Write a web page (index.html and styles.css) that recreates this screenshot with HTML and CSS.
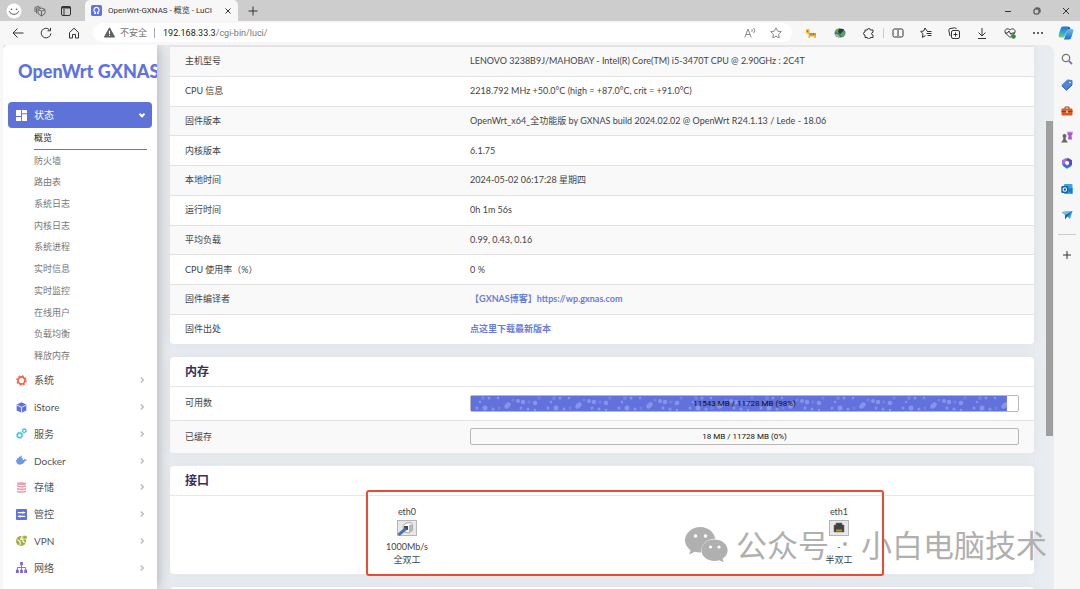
FILE: index.html
```
<!DOCTYPE html>
<html lang="zh-CN">
<head>
<meta charset="utf-8">
<meta name="viewport" content="width=device-width, initial-scale=1">
<title>OpenWrt-GXNAS - 概览 - LuCI</title>
<link rel="stylesheet" href="styles.css">
</head>
<body>
<header class="titlebar">
  <div class="window-tools">
    <button class="avatar" aria-label="用户"><svg viewBox="0 0 16 16" width="16" height="16"><circle cx="8" cy="8" r="7.5" fill="#fff"/><path d="M3.2 8.2c1.6 4.2 8 4.2 9.6 0" fill="none" stroke="#555" stroke-width="1"/><circle cx="5.5" cy="6.2" r=".8" fill="#555"/><circle cx="10.5" cy="6.2" r=".8" fill="#555"/></svg></button>
    <button aria-label="工作区"><svg class="line" viewBox="0 0 12 12" width="12" height="12"><path d="M4 4.500 7.500 3 11 4.500v4L7.500 11 4 8.500zM4 4.500l3.500 1.700L11 4.500M7.500 6.200V11M2.600 8.500V3.500L6.500 2M1 7V2.500L5 1"/></svg></button>
    <button aria-label="标签操作"><svg class="line dark" viewBox="0 0 12 12" width="12" height="12"><rect x="1.500" y="1.500" width="9" height="9" rx="1.500"/><path d="M1.500 2.500h9" stroke-width="2"/><path d="M4 4v6.500"/></svg></button>
  </div>
  <div class="tab">
    <svg viewBox="0 0 12 12" width="11" height="11"><rect width="12" height="12" rx="2" fill="#6172e8"/><path d="M3.500 9.200h1.300V8A2.800 2.800 0 1 1 7.200 8v1.200h1.300" fill="none" stroke="#fff" stroke-width="1.300"/></svg>
    <span>OpenWrt-GXNAS - 概览 - LuCI</span>
    <button aria-label="关闭标签"><svg class="line dark" viewBox="0 0 8 8" width="8" height="8"><path d="M1.500 1.500l5 5M6.500 1.500l-5 5"/></svg></button>
  </div>
  <button class="new-tab" aria-label="新建标签"><svg class="line dark" viewBox="0 0 10 10" width="10" height="10"><path d="M5 .5v9M.5 5h9"/></svg></button>
  <div class="window-controls">
    <button aria-label="最小化"><svg class="line dark" viewBox="0 0 8 8" width="8" height="8"><path d="M1 4.500h6"/></svg></button>
    <button aria-label="还原"><svg class="line dark" viewBox="0 0 8 8" width="8" height="8"><rect x="1" y="2" width="5" height="5" rx="1"/><path d="M2.500 1h3A1.500 1.500 0 0 1 7 2.500v3"/></svg></button>
    <button aria-label="关闭"><svg class="line dark" viewBox="0 0 8 8" width="8" height="8"><path d="M1 1l6 6M7 1 1 7"/></svg></button>
  </div>
</header>

<div class="toolbar">
  <div class="nav-buttons">
    <button aria-label="后退"><svg class="line dark" viewBox="0 0 12 12" width="12" height="12"><path d="M11.500 6H1M5.500 1.500 1 6l4.500 4.500"/></svg></button>
    <button aria-label="刷新"><svg class="line dark" viewBox="0 0 12 12" width="12" height="12"><path d="M10.800 6.500A4.800 4.800 0 1 1 9.500 2.800M10.500.8v3h-3"/></svg></button>
    <button aria-label="主页"><svg class="line dark" viewBox="0 0 12 12" width="12" height="12"><path d="M1.500 5.500 6 1.200l4.500 4.300V11H7.500V7.500h-3V11h-3z"/></svg></button>
  </div>
  <div class="address">
    <svg viewBox="0 0 12 12" width="11" height="11"><path d="M6 .8 11.600 11H.4z" fill="#616161" stroke="#616161" stroke-linejoin="round"/><path d="M6 4v3.500M6 8.500v1.300" stroke="#fff" stroke-width="1.200"/></svg>
    <span class="unsafe">不安全</span>
    <span class="url"><b>192.168.33.3</b>/cgi-bin/luci/</span>
    <button aria-label="朗读"><svg class="line gray" viewBox="0 0 12 12" width="12" height="12"><path d="M.8 10.500 4 2l3.200 8.500M2 7.500h4M7.500 2c1 .8 1 2 0 3M9.500 1c1.500 1.500 1.500 3.800 0 5"/></svg></button>
    <button aria-label="收藏"><svg class="line gray" viewBox="0 0 12 12" width="12" height="12"><path d="M6 .8l1.600 3.300 3.700.5-2.700 2.600.6 3.700L6 9.200l-3.200 1.700.6-3.700L.7 4.600l3.700-.5z"/></svg></button>
  </div>
  <div class="extensions">
    <button aria-label="扩展一"><svg viewBox="0 0 12 12" width="12" height="12"><path d="M1 2l1 .6L3.500 2l1 .6V6H11v5H9.500V9.500H5V11H3.500V7L1 6z" fill="#efb32d"/><path d="M4.500 6h6.500v2.500H4.500z" fill="#e09a25"/><path d="M6 6v2M8.500 6v2" stroke="#a96b20"/><circle cx="2.500" cy="4" r=".6" fill="#633"/></svg></button>
    <button aria-label="下载管理器"><svg viewBox="0 0 12 12" width="12" height="12"><ellipse cx="6" cy="6" rx="5.500" ry="4.500" fill="#2876b8"/><path d="M1 4.500C2 2 5 1 7 2L5 5 3 6zM6 7l4-3 1 3-3 3z" fill="#67a83a"/><path d="M5 2h5L8 5 6.500 7 4 5z" fill="#2d3d2a"/><path d="M1 7l3 .5 2 2.500-3-.5z" fill="#f1c52f"/></svg></button>
    <button aria-label="扩展"><svg class="line dark" viewBox="0 0 12 12" width="12" height="12"><path d="M2 3h2.300a1.500 1.500 0 0 1 3 0H10v2.300a1.300 1.300 0 0 0 0 2.800v2.400H7.300a1.500 1.500 0 0 1-3 0H2V8a1.500 1.500 0 0 1 0-3z"/></svg></button>
  </div>
  <div class="tools">
    <button aria-label="分屏"><svg class="line dark" viewBox="0 0 12 12" width="12" height="12"><path d="M5 2H2.500Q1 2 1 3.500v5Q1 10 2.500 10H5M7 2h2.500Q11 2 11 3.500v5Q11 10 9.500 10H7M6 1v10"/></svg></button>
    <button aria-label="收藏夹"><svg class="line dark" viewBox="0 0 12 12" width="12" height="12"><path d="M7 4 5 1 3.700 4 .7 4.500 3 6.800l-.6 3.500L5.500 8.700M7 4.500h4.500M6.500 6.500h5M7.500 8.500h4"/></svg></button>
    <button aria-label="集锦"><svg class="line dark" viewBox="0 0 12 12" width="12" height="12"><rect x="3.500" y="3.500" width="8" height="8" rx="1.500"/><path d="M7.500 5.500v4M5.500 7.500h4M2 9 .8 3.500Q.5 2 2 1.600L6.500.8Q8 .6 8.400 2"/></svg></button>
    <button aria-label="下载"><svg class="line dark" viewBox="0 0 12 12" width="12" height="12"><path d="M6 1v7.500M2.500 5.500 6 9l3.500-3.500M2 11.500h8"/></svg></button>
    <button aria-label="浏览器概要"><svg class="line dark" viewBox="0 0 12 12" width="12" height="12"><path d="M6 10.500 1.500 6C-.5 3.500 3 0 6 3c3-3 6.500.5 4.500 3zM1 6h2.500L5 4l2 3.500L8 6h3"/><circle cx="9.500" cy="9.500" r="2.300" fill="#318b3e" stroke="none"/></svg></button>
    <button aria-label="设置及其他"><svg viewBox="0 0 12 12" width="12" height="12" fill="#333"><circle cx="2" cy="6" r="1"/><circle cx="6" cy="6" r="1"/><circle cx="10" cy="6" r="1"/></svg></button>
    <button aria-label="Copilot"><svg viewBox="0 0 16 14" width="16" height="14"><defs><linearGradient id="cop" x2="0" y2="1"><stop stop-color="#2270d8"/><stop offset=".5" stop-color="#23a9cf"/><stop offset="1" stop-color="#7bcf74"/></linearGradient><linearGradient id="cop2" x2="0" y2="1"><stop stop-color="#62c5e8"/><stop offset="1" stop-color="#2468d4"/></linearGradient></defs><path d="M5 .5h5l-3 9Q6.500 11.500 5 11.500H2Q.2 11.500.7 9l2-6.500Q3.300.5 5 .5z" fill="url(#cop)"/><path d="M11 3h3q2 0 1.300 2l-2 6.500Q12.700 13.500 11 13.500H6l3-9Q9.500 3 11 3z" fill="url(#cop2)"/><path d="M10 .5q2 0 2.500 2.500H11Q9.500 3 9 4.500L7.500 8z" fill="#1c4fb7"/></svg></button>
  </div>
</div>

<div class="workspace">
  <nav class="sidebar">
    <a class="brand" href="#">OpenWrt GXNAS</a>
    <a class="menu-link active" href="#"><svg viewBox="0 0 12 12" width="11" height="11" fill="#fff"><path d="M0 0h5.500v6.500H0zM6.500 0H12v3.500H6.500zM0 7.500h5.500V12H0zM6.500 4.500H12V12H6.500z"/></svg><span>状态</span><svg class="chevron" viewBox="0 0 8 8" width="8" height="8"><path d="M1.500 2.800 4 5.300l2.500-2.500"/></svg></a>
    <ul class="submenu">
      <li class="current"><a href="#">概览</a></li>
      <li><a href="#">防火墙</a></li>
      <li><a href="#">路由表</a></li>
      <li><a href="#">系统日志</a></li>
      <li><a href="#">内核日志</a></li>
      <li><a href="#">系统进程</a></li>
      <li><a href="#">实时信息</a></li>
      <li><a href="#">实时监控</a></li>
      <li><a href="#">在线用户</a></li>
      <li><a href="#">负载均衡</a></li>
      <li><a href="#">释放内存</a></li>
    </ul>
    <div class="menu">
      <a class="menu-link" href="#"><svg viewBox="0 0 12 12" width="11" height="11"><circle cx="6" cy="6" r="3.800" fill="none" stroke="#ee6c4d" stroke-width="2"/><circle cx="6" cy="6" r="5" fill="none" stroke="#ee6c4d" stroke-width="1.600" stroke-dasharray="2 1.927"/></svg><span>系统</span><svg class="chevron" viewBox="0 0 8 8" width="8" height="8"><path d="M2.800 1.500 5.300 4 2.800 6.500"/></svg></a>
      <a class="menu-link" href="#"><svg viewBox="0 0 12 12" width="11" height="11"><path d="M6 .3 11.300 2.800v6.400L6 11.800.7 9.200V2.800z" fill="#5e72e4"/><path d="M.7 3.200 6 5.800l5.300-2.600M6 5.800v6" fill="none" stroke="#fff" stroke-width=".9"/></svg><span>iStore</span><svg class="chevron" viewBox="0 0 8 8" width="8" height="8"><path d="M2.800 1.500 5.300 4 2.800 6.500"/></svg></a>
      <a class="menu-link" href="#"><svg viewBox="0 0 12 12" width="11" height="11" fill="none" stroke="#42c4e0"><circle cx="4" cy="8" r="2.500" stroke-width="1.500"/><circle cx="4" cy="8" r="3.500" stroke-dasharray="1.300 1.450"/><circle cx="9" cy="3" r="1.800" stroke-width="1.300"/><circle cx="9" cy="3" r="2.600" stroke-dasharray="1 1.040"/></svg><span>服务</span><svg class="chevron" viewBox="0 0 8 8" width="8" height="8"><path d="M2.800 1.500 5.300 4 2.800 6.500"/></svg></a>
      <a class="menu-link" href="#"><svg viewBox="0 0 12 12" width="11" height="11" fill="#6b99e8"><path d="M0 5.500h8.500c.8-.5.500-1.500.2-2 .8.300 1.200 1 1.300 1.600.8-.2 1.500 0 2 .3-.4.800-1.200 1.200-2.200 1.200C8.700 9.300 6.600 10.500 4 10.500 1.500 10.500.2 8.500 0 5.500zM1 3.500h6.500V5.600H1zM3 2h3v1.500H3zM5 .8h1.500V2H5z"/></svg><span>Docker</span><svg class="chevron" viewBox="0 0 8 8" width="8" height="8"><path d="M2.800 1.500 5.300 4 2.800 6.500"/></svg></a>
      <a class="menu-link" href="#"><svg viewBox="0 0 12 12" width="11" height="11" fill="#e9a0b0"><ellipse cx="6" cy="1.800" rx="5" ry="1.600"/><path d="M1 3c1.500 1.500 8.500 1.500 10 0v2c-1.500 1.500-8.500 1.500-10 0zM1 6c1.500 1.500 8.500 1.500 10 0v2c-1.500 1.500-8.500 1.500-10 0zM1 9c1.500 1.500 8.500 1.500 10 0v1.500c-1.500 1.700-8.500 1.700-10 0z"/></svg><span>存储</span><svg class="chevron" viewBox="0 0 8 8" width="8" height="8"><path d="M2.800 1.500 5.300 4 2.800 6.500"/></svg></a>
      <a class="menu-link" href="#"><svg viewBox="0 0 12 12" width="11" height="11"><rect width="12" height="12" rx="1" fill="#5e72e4"/><path d="M2 4h8M2 8h8M7.500 2.800v2.400M4.500 6.800v2.400" stroke="#fff" stroke-width="1.200"/></svg><span>管控</span><svg class="chevron" viewBox="0 0 8 8" width="8" height="8"><path d="M2.800 1.500 5.300 4 2.800 6.500"/></svg></a>
      <a class="menu-link" href="#"><svg viewBox="0 0 12 12" width="11" height="11"><circle cx="5.500" cy="6.500" r="5.500" fill="#a4ad37"/><path d="M1.500 5l3 2.500v3.500M6.500 1.500 5 4.500h2.500V7l2 1.500" fill="none" stroke="#fff" stroke-width="1.200"/><rect x="7.500" y=".5" width="4.500" height="4" rx="1" fill="#a4ad37" stroke="#fff" stroke-width=".6"/></svg><span>VPN</span><svg class="chevron" viewBox="0 0 8 8" width="8" height="8"><path d="M2.800 1.500 5.300 4 2.800 6.500"/></svg></a>
      <a class="menu-link" href="#"><svg viewBox="0 0 12 12" width="11" height="11"><path d="M4.500 0h3v3.500h-3zM0 8.500h3V12H0zM4.500 8.500h3V12h-3zM9 8.500h3V12H9z" fill="#8363d6"/><path d="M6 3v6M1.500 9V6h9v3" fill="none" stroke="#8363d6"/></svg><span>网络</span><svg class="chevron" viewBox="0 0 8 8" width="8" height="8"><path d="M2.800 1.500 5.300 4 2.800 6.500"/></svg></a>
    </div>
  </nav>

  <main class="content">
    <section class="card card-continued">
      <table class="info">
        <tr><th scope="row">主机型号</th><td>LENOVO 3238B9J/MAHOBAY - Intel(R) Core(TM) i5-3470T CPU @ 2.90GHz : 2C4T</td></tr>
        <tr><th scope="row">CPU 信息</th><td>2218.792 MHz +50.0°C (high = +87.0°C, crit = +91.0°C)</td></tr>
        <tr><th scope="row">固件版本</th><td>OpenWrt_x64_全功能版 by GXNAS build 2024.02.02 @ OpenWrt R24.1.13 / Lede - 18.06</td></tr>
        <tr><th scope="row">内核版本</th><td>6.1.75</td></tr>
        <tr><th scope="row">本地时间</th><td>2024-05-02 06:17:28 星期四</td></tr>
        <tr><th scope="row">运行时间</th><td>0h 1m 56s</td></tr>
        <tr><th scope="row">平均负载</th><td>0.99, 0.43, 0.16</td></tr>
        <tr><th scope="row">CPU 使用率（%）</th><td>0 %</td></tr>
        <tr><th scope="row">固件编译者</th><td><a href="#">【GXNAS博客】https://wp.gxnas.com</a></td></tr>
        <tr><th scope="row">固件出处</th><td><a href="#">点这里下载最新版本</a></td></tr>
      </table>
    </section>

    <section class="card">
      <h2>内存</h2>
      <table class="info memory">
        <tr><th scope="row">可用数</th><td>
          <div class="meter" role="progressbar" aria-label="可用数" aria-valuenow="98">
            <svg class="fill" style="width:98%" aria-hidden="true"><defs><pattern id="bubbles" width="71" height="16" patternUnits="userSpaceOnUse"><rect width="71" height="16" fill="#6172dc"/><g fill="#8794e9"><circle cx="6" cy="12" r="1.500"/><circle cx="14" cy="12" r="2.500"/><circle cx="22" cy="13" r="1.500"/><circle cx="9" cy="6" r="1.300"/><circle cx="18" cy="2" r="1.500"/><circle cx="27" cy="2" r="1.300"/><path d="M33 11q1-4 5-5l2 2q-1 4-5 5z"/><circle cx="47" cy="5" r="2"/><circle cx="52" cy="6" r="2.200"/><circle cx="50" cy="12" r="1.500"/><circle cx="57" cy="13" r="1.500"/><circle cx="64" cy="7" r="2.300"/><circle cx="64" cy="14" r="1.200"/></g><g fill="#7584e3"><circle cx="12" cy="2" r="2"/><circle cx="28" cy="12" r="1.500"/><circle cx="42" cy="4" r="1.500"/><circle cx="58" cy="6" r="1.500"/><circle cx="68" cy="2" r="1.500"/></g></pattern></defs><rect width="100%" height="100%" fill="url(#bubbles)"/></svg>
            <span>11543 MB / 11728 MB (98%)</span>
          </div></td></tr>
        <tr><th scope="row">已缓存</th><td><div class="meter" role="progressbar" aria-label="已缓存" aria-valuenow="0"><span>18 MB / 11728 MB (0%)</span></div></td></tr>
      </table>
    </section>

    <section class="card">
      <h2>接口</h2>
      <div class="ports">
        <div class="port"><span>eth0</span>
          <svg viewBox="0 0 20 16" width="20" height="16"><rect x=".5" y=".5" width="19" height="15" fill="#e8e8e8" stroke="#b5b5b5"/><path d="M6 5.500 9 3l5-.5 1.500 2v6L12 13l-5-1z" fill="#f9f9f9" stroke="#999" stroke-width=".8"/><path d="M12 5v8l3-2.500v-6z" fill="#b8b8b8"/><path d="M7 6h4v4H7z" fill="#454a50"/><path d="M1.500 15 9 8.500" stroke="#4a75b5" stroke-width="3"/></svg>
          <span>1000Mb/s</span><span>全双工</span></div>
        <div class="port"><span>eth1</span>
          <svg viewBox="0 0 20 16" width="20" height="16"><rect x=".5" y=".5" width="19" height="15" fill="#e8e8e8" stroke="#b5b5b5"/><path d="M5 12V5h2V3h6v2h2v7z" fill="#424242" stroke="#666" stroke-width=".5"/><path d="M7 10.500h6" stroke="#a89926" stroke-width="2"/></svg>
          <span>-</span><span>半双工</span></div>
      </div>
    </section>
    <section class="card next"></section>
    <div class="scroll-thumb"></div>
  </main>

  <aside class="edge-bar">
    <button aria-label="搜索"><svg viewBox="0 0 12 12" width="12" height="12" fill="none"><circle cx="5" cy="5" r="3.700" stroke="#777" stroke-width="1.300"/><path d="M8 8l3 3" stroke="#9865ce" stroke-width="1.800"/></svg></button>
    <button aria-label="购物"><svg viewBox="0 0 12 12" width="12" height="12"><path d="M6.500 1 11 1.500v4.500L5.500 11 .8 6.500z" fill="#4e86d8" stroke="#4978cd" stroke-linejoin="round"/><path d="M1 7l4.500 4L11 6" fill="none" stroke="#345cae"/><circle cx="9" cy="3.500" r=".8" fill="#fff"/></svg></button>
    <button aria-label="工具"><svg viewBox="0 0 12 12" width="12" height="12"><path d="M4 4V2h4v2" fill="none" stroke="#983a1e"/><rect x=".5" y="3.500" width="11" height="7" rx="1" fill="#d95828"/><path d="M.5 6.500h11" stroke="#9d391a"/><rect x="5" y="5.500" width="2" height="2.500" fill="#f3c5a9"/></svg></button>
    <button aria-label="游戏"><svg viewBox="0 0 12 12" width="12" height="12"><path d="M6.500.5h1v1h1v-1h1v1h1v-1h1v3l-1 1 .5 4H7l.5-4-1-1z" fill="#a55bc9"/><circle cx="3.500" cy="5" r="2" fill="#686868"/><path d="M2.500 6h2L5 9l2 2.500H0L2 9z" fill="#686868"/></svg></button>
    <button aria-label="Microsoft 365"><svg viewBox="0 0 12 12" width="12" height="12" fill="none" stroke-width="3"><path d="M6 2 2.500 4v4" stroke="#a66de0"/><path d="M2.500 7.500 6 10l3.500-2" stroke="#3e70da"/><path d="M9.500 8.500V4L6 2" stroke="#604abb"/></svg></button>
    <button aria-label="Outlook"><svg viewBox="0 0 12 12" width="12" height="12"><rect x="3" y="1" width="8.500" height="10" rx="1" fill="#36a3e4"/><path d="M5 6l6.500 5V5z" fill="#1879c5"/><rect x=".3" y="3" width="7" height="7" rx="1" fill="#1264aa"/><circle cx="3.800" cy="6.500" r="1.800" fill="none" stroke="#fff" stroke-width="1.100"/></svg></button>
    <button aria-label="Drop"><svg viewBox="0 0 12 12" width="12" height="12"><path d="M.5 3 11.500 2 9 10 6.500 7.500z" fill="#36a3dc"/><path d="M11.500 2 4 6v4.500L6 8z" fill="#1e62a5"/><path d="M.5 3l3.500 3 7.500-4z" fill="#65c3eb"/></svg></button>
    <hr>
    <button aria-label="添加"><svg class="line dark" viewBox="0 0 10 10" width="10" height="10"><path d="M5 1v8M1 5h8"/></svg></button>
  </aside>
</div>

<div class="watermark">
  <svg viewBox="0 0 43 35" width="43" height="35"><path d="M15.500 0C7 0 0 6 0 13.300c0 4 2.200 7.500 5.600 9.900L4.300 27.500l5.400-2.700c2 .6 4 .9 6.500.8C15.500 17.500 22 12 30.300 11.800 29 5 22.800 0 15.500 0z"/><path d="M29.500 12.500C22 12.500 16.500 17.300 16.500 23.300S22 34 29.500 34c1.700 0 3.300-.2 4.800-.7l4.400 2.200-1.100-3.700c3-2 5-5 5-8.500 0-6-5.700-10.800-13.100-10.800z"/><g fill="#fff"><circle cx="10.500" cy="9" r="1.800"/><circle cx="20.500" cy="9" r="1.800"/><circle cx="25.500" cy="20" r="1.600"/><circle cx="34" cy="20" r="1.600"/></g></svg>
  <span>公众号</span><i></i><span>小白电脑技术</span>
</div>
<div class="highlight"></div>
</body>
</html>
```
FILE: styles.css
```
* { box-sizing: border-box; }
body {
  margin: 0;
  height: 100vh;
  display: flex;
  flex-direction: column;
  overflow: hidden;
  position: relative;
  background: #f7f7f7;
  color: #444;
  font: 9px/12px Lato, "Noto Sans CJK SC", sans-serif;
}
a { color: inherit; text-decoration: none; }
button {
  display: flex;
  align-items: center;
  justify-content: center;
  padding: 0;
  border: 0;
  background: none;
}
svg { display: block; flex: none; }
.line { fill: none; stroke: #666; stroke-width: 1; }
.dark { stroke: #333; }
.gray { stroke: #888; }

.titlebar {
  display: flex;
  flex: none;
  height: 21px;
  background: #cdcdcd;
  color: #333;
  font-family: Roboto, "Noto Sans CJK SC", sans-serif;
  font-size: 8px;
}
.window-tools { display: flex; width: 85px; padding-left: 1px; }
.window-tools button { width: 26px; }
.tab {
  display: flex;
  align-items: center;
  width: 153px;
  padding: 0 6px;
  gap: 6px;
  background: #f7f7f7;
  border-radius: 5px 5px 0 0;
}
.tab span { flex: 1; white-space: nowrap; }
.new-tab { width: 29px; }
.window-controls { display: flex; margin-left: auto; }
.window-controls button { width: 29px; }

.toolbar { display: flex; flex: none; height: 24px; }
.nav-buttons { display: flex; padding-left: 4px; }
.nav-buttons button { width: 28px; }
.address {
  display: flex;
  align-items: center;
  flex: 1;
  height: 19px;
  margin: 2px 4px 0 5px;
  padding: 0 11px;
  background: #fff;
  border-radius: 10px;
  color: #777;
  font-family: Roboto, "Noto Sans CJK SC", sans-serif;
}
.unsafe { margin: 0 7px 0 5px; }
.url { flex: 1; padding-left: 8px; border-left: 1px solid #aaa; line-height: 10px; }
.url b { color: #222; font-weight: 400; }
.address button { width: 26px; }
.address button:last-child { margin-right: -8px; }
.extensions { display: flex; }
.extensions button { width: 29px; }
.tools { display: flex; }
.tools::before { content: ""; width: 1px; height: 10px; margin-top: 7px; background: #ccc; }
.tools button { width: 28px; }

.workspace { display: flex; flex: 1; min-height: 0; }
.sidebar {
  z-index: 1;
  width: 154px;
  margin-left: 3px;
  padding: 0 5px;
  overflow: hidden;
  background: #fff;
  border-radius: 5px 0 0 0;
  clip-path: inset(0 -20px 0 0);
  box-shadow: 0 0 14px rgba(60, 60, 60, .4);
}
.brand {
  display: block;
  height: 57px;
  padding: 14px 0 0 10px;
  color: #5e72e4;
  font: 900 18px/24px Lato, sans-serif;
  white-space: nowrap;
}
.menu-link {
  display: flex;
  align-items: center;
  padding: 0 6px 0 8px;
  color: #525f7f;
  font-size: 10px;
}
.menu-link span { flex: 1; margin-left: 7px; color: #555; }
.active { height: 26px; border-radius: 4px; background: #5e72d8; }
.active span { color: #fff; }
.chevron { fill: none; stroke: #b9bec6; stroke-width: 1.5; }
.active .chevron { stroke: #fff; stroke-width: 2; }
.submenu {
  display: grid;
  grid-auto-rows: 1fr;
  height: 239px;
  margin: 0;
  padding: 0 5px 0 26px;
  list-style: none;
  color: #777;
}
.submenu li { display: flex; align-items: center; }
.submenu .current { color: #222; border-bottom: 1px solid #5e72e4; }
.menu { display: grid; grid-auto-rows: 1fr; height: 214px; }

.content {
  position: relative;
  display: flex;
  flex-direction: column;
  gap: 13px;
  flex: 1;
  min-width: 0;
  padding: 1px 20px 0 13px;
  overflow: hidden;
  background: #e9ecf0;
  border-radius: 0 8px 0 0;
}
.card {
  flex: none;
  overflow: hidden;
  background: #fff;
  border-radius: 4px;
  box-shadow: 0 0 12px rgba(136, 152, 170, .1);
}
.card-continued { padding-bottom: 1px; border-radius: 0 0 4px 4px; }
.next { height: 20px; }
.card h2 {
  height: 30px;
  margin: 0;
  padding: 0 15px;
  border-bottom: 1px solid #e6e6e6;
  color: #32325d;
  font-size: 12px;
  line-height: 29px;
}
.info {
  width: 100%;
  height: 297px;
  border-collapse: collapse;
  table-layout: fixed;
}
.info th, .info td {
  padding: 0 15px;
  border-top: 1px solid #e3e3e3;
  font-weight: 400;
  text-align: left;
}
.info th { width: 33%; }
.info tr:nth-child(odd) { background: #f9f9f9; }
.info a { color: #6b7cd8; font-weight: 700; }
.info.memory { height: 66px; }
.memory tr:first-child th, .memory tr:first-child td { border-top: 0; }
.info.memory tr:nth-child(odd) { background: #fff; }
.info.memory tr:nth-child(even) { background: #f9f9f9; }
.meter {
  display: grid;
  height: 17px;
  border: 1px solid #b8b8b8;
  border-radius: 2px;
  color: #111;
  font: 8px/16px Roboto, sans-serif;
  text-align: center;
}
.meter > * { grid-area: 1 / 1; }
.fill { height: 15px; }
.ports { display: grid; grid-template-columns: 1fr 1fr; padding: 10px 0 8px; }
.port {
  display: flex;
  flex-direction: column;
  align-items: center;
  padding-left: 42px;
}
.port svg { margin: 2px 0 5px; }
.port span:last-child { margin-top: 1px; }
.scroll-thumb {
  position: absolute;
  top: 76px;
  right: 1px;
  width: 7px;
  height: 315px;
  background: #9e9e9e;
}
.edge-bar { width: 26px; padding-top: 1px; }
.edge-bar button { width: 26px; height: 26px; }
.edge-bar hr { width: 18px; margin: 6px 4px 7px; border: 0; border-top: 1px solid #ccc; }

.watermark {
  position: absolute;
  top: 525px;
  right: 33px;
  display: flex;
  align-items: center;
  color: #b0b0b0;
  font: 400 31px/38px "Noto Sans CJK SC", sans-serif;
  pointer-events: none;
}
.watermark svg { margin-right: 8px; fill: #b0b0b0; }
.watermark i { width: 4px; height: 4px; margin: 0 14px; border-radius: 2px; background: #b0b0b0; }
.highlight {
  position: absolute;
  top: 490px;
  left: 366px;
  width: 518px;
  height: 86px;
  border: 2px solid #ea4b33;
  border-radius: 3px;
  pointer-events: none;
}
```
